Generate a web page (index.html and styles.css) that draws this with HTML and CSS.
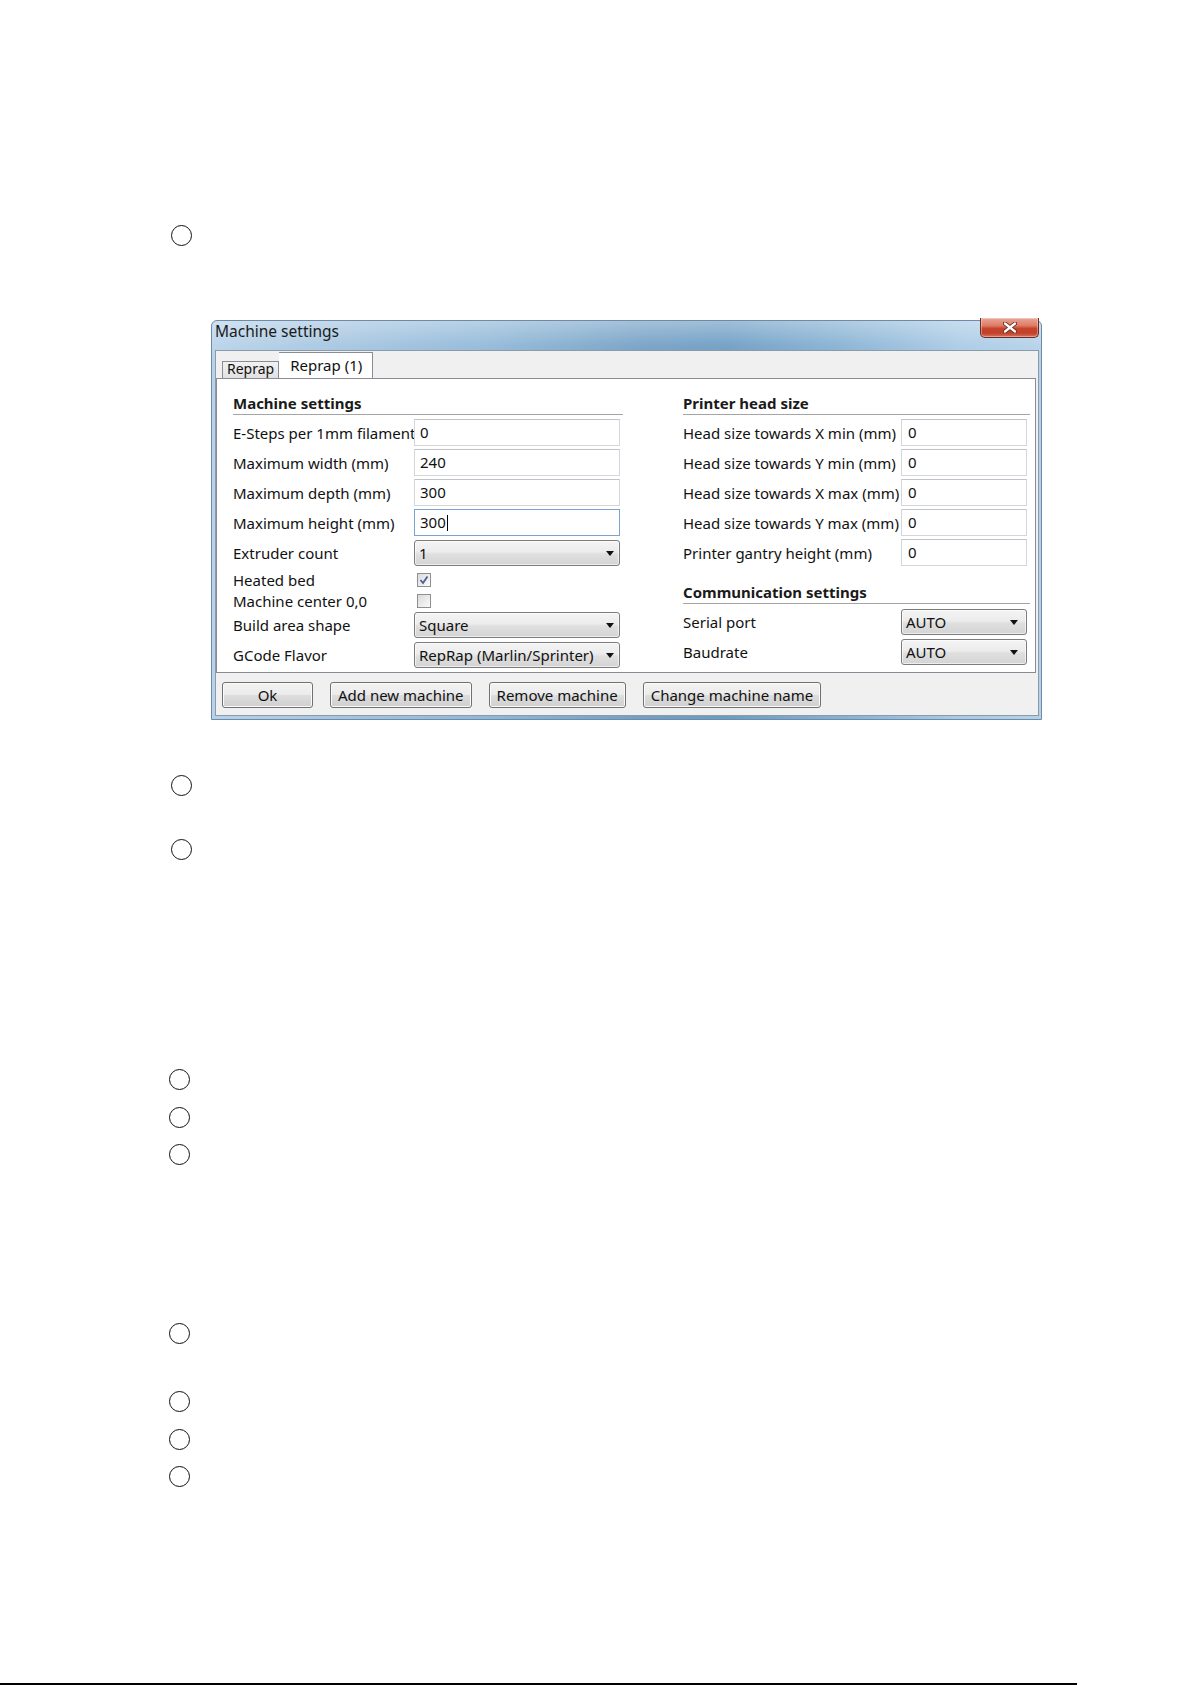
FILE: index.html
```html
<!DOCTYPE html>
<html lang="en">
<head>
    <meta charset="UTF-8">
    <title>Machine settings</title>
    <link rel="stylesheet" href="styles.css">
</head>
<body>
    <div class="page">
        <span class="mark upper"></span>

        <div class="dialog">
            <div class="titlebar">
                <span class="title">Machine settings</span>
                <span class="close">
                    <svg width="14" height="11" viewBox="0 0 14 11">
                        <path d="M2 1.5 L12 9.5 M12 1.5 L2 9.5" stroke="#5a2018" stroke-width="4" stroke-linecap="round"/>
                        <path d="M2 1.5 L12 9.5 M12 1.5 L2 9.5" stroke="#fff" stroke-width="2.4" stroke-linecap="round"/>
                    </svg>
                </span>
            </div>

            <div class="client">
                <div class="tabs">
                    <div class="tab">Reprap</div>
                    <div class="tab active">Reprap (1)</div>
                </div>

                <div class="panel">
                    <!-- columna izquierda -->
                    <div class="col left">
                        <div class="heading">Machine settings</div>
                        <div class="row"><span class="label">E-Steps per 1mm filament</span><div class="field">0</div></div>
                        <div class="row"><span class="label">Maximum width (mm)</span><div class="field">240</div></div>
                        <div class="row"><span class="label">Maximum depth (mm)</span><div class="field">300</div></div>
                        <div class="row"><span class="label">Maximum height (mm)</span><div class="field focus">300<span class="caret"></span></div></div>
                        <div class="row combo-row"><span class="label">Extruder count</span><div class="combo">1</div></div>
                        <div class="row check-row">
                            <span class="label">Heated bed</span>
                            <span class="checkbox">
                                <svg width="12" height="12" viewBox="0 0 12 12"><path d="M2.5 6 L5 9 L9.5 2.5" fill="none" stroke="#4b5f9a" stroke-width="1.8"/></svg>
                            </span>
                        </div>
                        <div class="row check-row"><span class="label">Machine center 0,0</span><span class="checkbox"></span></div>
                        <div class="row combo-row"><span class="label">Build area shape</span><div class="combo">Square</div></div>
                        <div class="row combo-row"><span class="label">GCode Flavor</span><div class="combo">RepRap (Marlin/Sprinter)</div></div>
                    </div>

                    <!-- columna derecha -->
                    <div class="col right">
                        <div class="heading">Printer head size</div>
                        <div class="row"><span class="label">Head size towards X min (mm)</span><div class="field">0</div></div>
                        <div class="row"><span class="label">Head size towards Y min (mm)</span><div class="field">0</div></div>
                        <div class="row"><span class="label">Head size towards X max (mm)</span><div class="field">0</div></div>
                        <div class="row"><span class="label">Head size towards Y max (mm)</span><div class="field">0</div></div>
                        <div class="row"><span class="label">Printer gantry height (mm)</span><div class="field">0</div></div>
                        <div class="heading second">Communication settings</div>
                        <div class="row combo-row"><span class="label">Serial port</span><div class="combo">AUTO</div></div>
                        <div class="row combo-row"><span class="label">Baudrate</span><div class="combo">AUTO</div></div>
                    </div>
                </div>

                <div class="buttons">
                    <button class="btn ok">Ok</button>
                    <button class="btn">Add new machine</button>
                    <button class="btn">Remove machine</button>
                    <button class="btn">Change machine name</button>
                </div>
            </div>
        </div>

        <span class="mark upper after-dialog"></span>
        <span class="mark upper gap-43"></span>

        <span class="mark gap-209"></span>
        <span class="mark gap-17"></span>
        <span class="mark gap-16"></span>

        <span class="mark gap-158"></span>
        <span class="mark gap-47"></span>
        <span class="mark gap-17"></span>
        <span class="mark gap-16"></span>

        <div class="footer-line"></div>
    </div>
</body>
</html>
```

FILE: styles.css
```css
/* Estilos globales */
* {
    margin: 0;
    padding: 0;
    box-sizing: border-box;
}

body {
    width: 1192px;
    height: 1685px;
    overflow: hidden;
    background: #fff;
    font-family: 'Noto Sans', 'DejaVu Sans', sans-serif;
    color: #111;
}

.page {
    padding-top: 225px;
}

/* Marcadores de la lista */
.mark {
    display: block;
    width: 21px;
    height: 21px;
    margin-left: 169px;
    border: 1.4px solid #111;
    border-radius: 50%;
}

.mark.upper { margin-left: 171px; }
.after-dialog { margin-top: 55px; }
.gap-43 { margin-top: 43px; }
.gap-209 { margin-top: 209px; }
.gap-17 { margin-top: 17px; }
.gap-16 { margin-top: 16px; }
.gap-158 { margin-top: 158px; }
.gap-47 { margin-top: 47px; }

.footer-line {
    width: 1077px;
    height: 2px;
    margin-top: 196px;
    background: #000;
}

/* Ventana */
.dialog {
    width: 831px;
    height: 400px;
    margin-top: 74px;
    margin-left: 211px;
    border: 1px solid #6d8aa6;
    border-radius: 6px 6px 0 0;
    background:
        linear-gradient(180deg, rgba(255, 255, 255, 0.35) 0%, rgba(255, 255, 255, 0.08) 6%, rgba(255, 255, 255, 0) 10%),
        linear-gradient(90deg, #b7d2e9 0%, #a6c6e1 14%, #8fb7d7 34%, #739fc4 52%, #6c9cc3 62%, #86b1d3 76%, #a9cae5 90%, #b4d1e9 100%);
    display: flex;
    flex-direction: column;
}

.titlebar {
    height: 29px;
    display: flex;
    align-items: flex-start;
    padding-left: 3px;
}

.title {
    font-size: 15.5px;
    line-height: 20px;
    color: #1b1b1b;
}

.close {
    margin-left: auto;
    margin-top: -3px;
    margin-right: 2px;
    width: 59px;
    height: 20px;
    display: flex;
    align-items: center;
    justify-content: center;
    border: 1px solid #6a2b22;
    border-top: none;
    border-radius: 0 0 5px 5px;
    background: linear-gradient(180deg, #e9a796 0%, #dd7c66 40%, #c8432b 55%, #c1412a 80%, #d4765f 100%);
    box-shadow: inset 0 0 0 1px rgba(255, 255, 255, 0.35);
}

.client {
    flex: 1;
    margin: 0 2px 3px 3px;
    background: #f0f0f0;
    border: 1px solid #8d9aa8;
    display: flex;
    flex-direction: column;
}

/* Pestañas */
.tabs {
    height: 27px;
    display: flex;
    align-items: flex-end;
    padding-left: 6px;
}

.tab {
    height: 17px;
    padding: 0 4px;
    font-size: 14px;
    line-height: 13px;
    border: 1px solid #898c95;
    border-bottom: none;
    background: linear-gradient(180deg, #f2f2f2, #e1e1e1);
    white-space: nowrap;
}

.tab.active {
    height: 27px;
    width: 94px;
    margin-bottom: -1px;
    padding: 2px 0 0 11px;
    font-size: 15px;
    line-height: 20px;
    background: #fff;
    border-left: none;
}

/* Panel */
.panel {
    height: 295px;
    margin-right: 2px;
    background: #fff;
    border: 1px solid #898c95;
    display: flex;
    gap: 60px;
    padding-left: 16px;
}

.col.left { width: 390px; }
.col.right { width: 347px; }

.heading {
    margin-top: 14px;
    padding-bottom: 1px;
    font-size: 15px;
    font-weight: bold;
    line-height: 20px;
    color: #1a1a1a;
    border-bottom: 1px solid #a5a5a5;
    box-shadow: 0 1px 0 #fff;
}

.heading.second { margin-top: 16px; }

.row {
    height: 27px;
    margin-top: 3px;
    display: flex;
    align-items: center;
    font-size: 15px;
}

.heading + .row { margin-top: 4px; }

.label {
    white-space: nowrap;
}

.left .label { width: 181px; }
.right .label { width: 218px; }

.field {
    height: 27px;
    border: 1px solid #d3d6db;
    border-top-color: #c0c4ca;
    background: #fff;
    padding-left: 5px;
    line-height: 25px;
    display: flex;
    align-items: center;
}

.left .field, .left .combo { width: 206px; }
.right .field, .right .combo { width: 126px; padding-left: 6px; }

.field.focus {
    border-color: #7aa3cf;
}

.caret {
    display: inline-block;
    width: 1px;
    height: 16px;
    margin-left: 1px;
    background: #000;
}

.combo-row {
    height: 26px;
    margin-top: 4px;
}

.check-row {
    height: 21px;
}

.check-row + .check-row { margin-top: 0; }
.check-row + .combo-row { margin-top: 1px; }
.heading.second + .combo-row { margin-top: 5px; }

.combo {
    height: 26px;
    display: flex;
    align-items: center;
    justify-content: space-between;
    padding: 0 5px 0 4px;
    border: 1px solid #7c7c7c;
    border-radius: 3px;
    background: linear-gradient(180deg, #f4f4f4 0%, #ececec 45%, #dfdfdf 55%, #d4d4d4 100%);
    box-shadow: inset 0 0 0 1px rgba(255, 255, 255, 0.6);
    white-space: nowrap;
}

.combo::after {
    content: '';
    border-left: 4px solid transparent;
    border-right: 4px solid transparent;
    border-top: 5px solid #111;
}

.right .combo { padding-right: 8px; padding-left: 4px; }

.checkbox {
    width: 14px;
    height: 14px;
    margin-left: 3px;
    border: 1px solid #8e8f8f;
    background: linear-gradient(135deg, #dadada, #fbfbfb);
    display: flex;
    align-items: center;
    justify-content: center;
}

/* Botones */
.buttons {
    flex: 1;
    display: flex;
    align-items: flex-start;
    gap: 17px;
    padding: 9px 0 0 6px;
}

.btn {
    height: 26px;
    padding: 0 7px;
    font-family: inherit;
    font-size: 15px;
    color: #111;
    border: 1px solid #707070;
    border-radius: 3px;
    background: linear-gradient(180deg, #f3f3f3 0%, #ebebeb 48%, #dddddd 52%, #cfcfcf 100%);
    box-shadow: inset 0 0 0 1px #fbfbfb;
}

.btn.ok { width: 91px; }
```
